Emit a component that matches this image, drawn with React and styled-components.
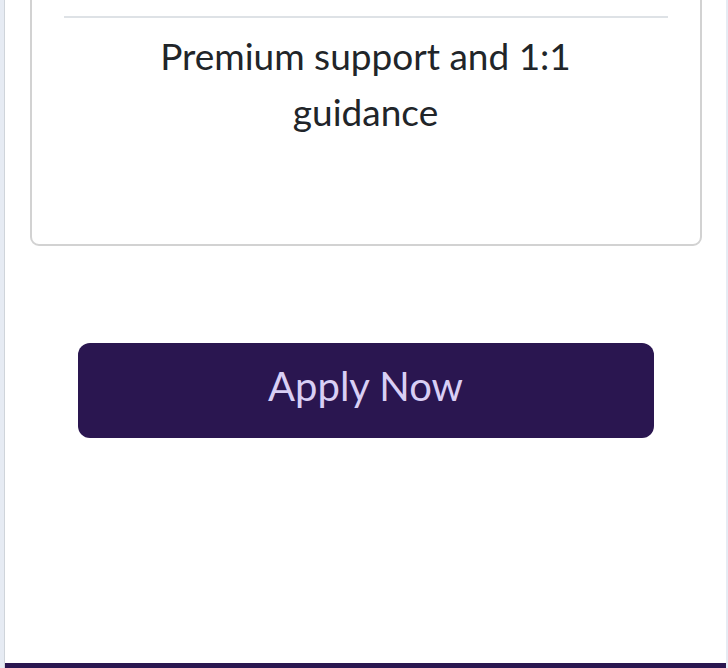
import React from "react";
import styled, { createGlobalStyle } from "styled-components";

const Global = createGlobalStyle`
  html, body {
    margin: 0;
    padding: 0;
    background: #e6ebf3;
    height: 100%;
    overflow: hidden;
  }
  body {
    font-family: Lato, "Open Sans", sans-serif;
    color: #212529;
  }
`;

const Page = styled.div`
  margin-left: 4px;
  width: 721px;
  height: 668px;
  background: #fff;
  border-left: 1px solid #cfd4da;
  display: flex;
  flex-direction: column;
  overflow: hidden;
`;

const Body = styled.div`
  flex: 1;
  display: flex;
  flex-direction: column;
  align-items: center;
`;

const Card = styled.div`
  box-sizing: border-box;
  width: 672px;
  margin-top: -62px;
  border: 2px solid #d2d2d2;
  border-radius: 9px;
  padding: 0 32px 103px;
`;

const Feature = styled.div`
  border-top: ${(p) => (p.first ? "none" : "2px solid #dee2e6")};
  padding: 10px 60px 1px;
  height: ${(p) => (p.first ? "65px" : "auto")};
  text-align: center;
  font-size: 37px;
  line-height: 56px;
`;

const Apply = styled.button`
  box-sizing: border-box;
  margin-top: 97px;
  width: 576px;
  height: 95px;
  padding: 0 0 10px;
  border: none;
  border-radius: 12px;
  background: #2a1650;
  color: #d9cff5;
  font-family: Lato, "Open Sans", sans-serif;
  font-size: 40px;
  cursor: pointer;
`;

const Footer = styled.div`
  height: 5px;
  background: #2a1650;
`;

export default function App() {
  return (
    <>
      <Global />
      <Page>
        <Body>
          <Card>
            <Feature first />
            <Feature>Premium support and 1:1 guidance</Feature>
          </Card>
          <Apply>Apply Now</Apply>
        </Body>
        <Footer />
      </Page>
    </>
  );
}
